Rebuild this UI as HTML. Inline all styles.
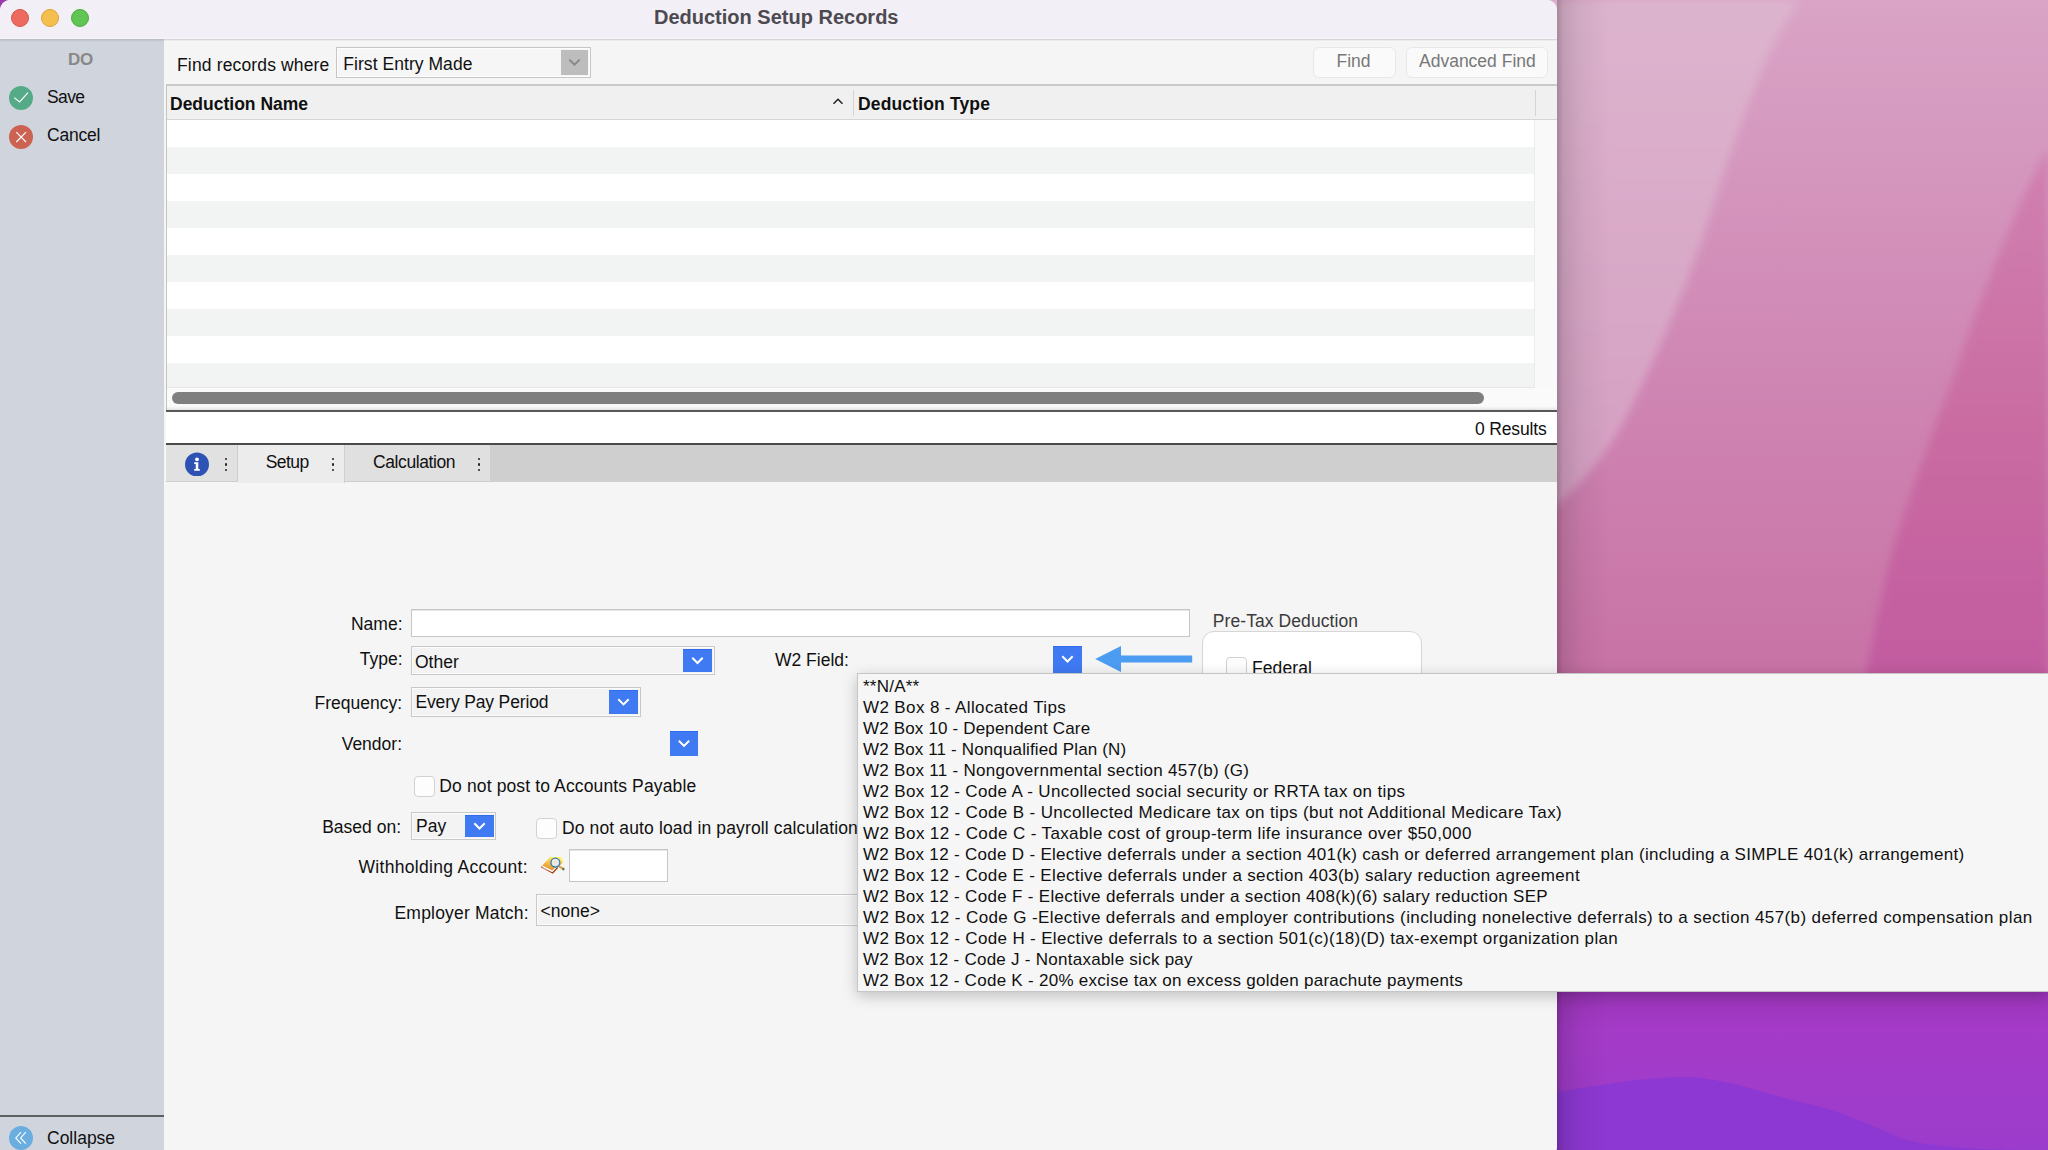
<!DOCTYPE html>
<html><head><meta charset="utf-8">
<style>
*{margin:0;padding:0;box-sizing:border-box}
html,body{width:2048px;height:1150px;overflow:hidden;background:#9a3aae}
body{position:relative;font-family:"Liberation Sans",sans-serif;color:#111}
.a{position:absolute}
.t{position:absolute;white-space:nowrap;line-height:20px;font-size:17.5px;color:#101010}
.b{font-weight:bold}
#wall{position:absolute;left:0;top:0;width:2048px;height:1150px}
.fld{position:absolute;background:#f3f3f3;border:1px solid #c8c8c8;box-shadow:inset 0 0 0 1px #fbfbfb}
.bb{position:absolute;background:#3f7af3;border-top:1px solid #2f6cf0}
.bb svg{position:absolute;left:0;top:-1px}
.cb{position:absolute;width:21px;height:21px;background:#fdfdfd;border:1px solid #d2d2d2;border-radius:4px}
#win{position:absolute;left:0;top:0;width:1557px;height:1157px;background:#f5f5f5;border-radius:10px;overflow:hidden}
</style></head><body>
<svg id="wall" width="2048" height="1150" viewBox="0 0 2048 1150">
<defs>
<linearGradient id="gM" x1="0" y1="0" x2="0" y2="680" gradientUnits="userSpaceOnUse">
<stop offset="0" stop-color="#d9a4c6"/><stop offset="0.55" stop-color="#cf86b3"/><stop offset="1" stop-color="#c872a6"/>
</linearGradient>
<linearGradient id="gL" x1="0" y1="0" x2="0" y2="560" gradientUnits="userSpaceOnUse">
<stop offset="0" stop-color="#ddb4ce"/><stop offset="1" stop-color="#d49cc1"/>
</linearGradient>
<linearGradient id="gR" x1="0" y1="170" x2="0" y2="680" gradientUnits="userSpaceOnUse">
<stop offset="0" stop-color="#d080b0"/><stop offset="0.5" stop-color="#ca6ca2"/><stop offset="1" stop-color="#c25ba0"/>
</linearGradient>
<linearGradient id="gP" x1="0" y1="990" x2="0" y2="1150" gradientUnits="userSpaceOnUse">
<stop offset="0" stop-color="#9a34b8"/><stop offset="0.25" stop-color="#a53bc8"/><stop offset="1" stop-color="#9c3ccc"/>
</linearGradient>
<linearGradient id="gSh" x1="1557" y1="0" x2="1610" y2="0" gradientUnits="userSpaceOnUse">
<stop offset="0" stop-color="#000" stop-opacity="0.24"/><stop offset="0.12" stop-color="#000" stop-opacity="0.12"/><stop offset="0.45" stop-color="#000" stop-opacity="0.05"/><stop offset="1" stop-color="#000" stop-opacity="0"/>
</linearGradient>
</defs>
<filter id="soft" x="-10%" y="-10%" width="120%" height="120%"><feGaussianBlur stdDeviation="4"/></filter>
<rect x="1500" y="0" width="548" height="700" fill="url(#gM)"/>
<path d="M1500 0 L1800 0 C1770 40 1745 110 1715 200 C1690 280 1660 350 1625 420 C1605 455 1585 480 1557 505 L1500 520 Z" fill="url(#gL)" filter="url(#soft)"/>
<path d="M2048 148 C2022 195 1997 255 1970 330 C1944 405 1915 475 1893 550 C1880 600 1870 650 1862 700 L2048 700 Z" fill="url(#gR)" filter="url(#soft)"/>
<rect x="1500" y="700" width="548" height="290" fill="#c468a6"/>
<rect x="1500" y="990" width="548" height="160" fill="url(#gP)"/>
<path d="M1557 1092 C1600 1085 1650 1076 1690 1077 C1730 1080 1760 1092 1800 1102 C1840 1110 1870 1125 1900 1138 C1940 1150 2000 1150 2048 1150 L1557 1150 Z" fill="#8d38d3"/>
<rect x="1557" y="0" width="60" height="1150" fill="url(#gSh)"/>
</svg>

<div id="win">
  <!-- title bar -->
  <div class="a" style="left:0;top:0;width:1557px;height:39px;background:#f3eff6"></div>
  <div class="a" style="left:0;top:38px;width:1557px;height:1px;background:#f8f5fa"></div>
  <div class="a" style="left:164px;top:39px;width:1393px;height:1px;background:#d6d6d6"></div>
  <div class="a" style="left:164px;top:40px;width:1393px;height:1px;background:#ebebeb"></div>
  <div class="a" style="left:11px;top:9px;width:18px;height:18px;border-radius:50%;background:#ed6a5e;border:0.5px solid #d8564a"></div>
  <div class="a" style="left:41px;top:9px;width:18px;height:18px;border-radius:50%;background:#f4bf4f;border:0.5px solid #dca33a"></div>
  <div class="a" style="left:71px;top:9px;width:18px;height:18px;border-radius:50%;background:#61c554;border:0.5px solid #4ea83f"></div>
  <div class="t b" style="left:654px;top:5px;font-size:20px;line-height:24px;color:#4c4a50">Deduction Setup Records</div>

  <!-- sidebar -->
  <div class="a" style="left:0;top:39px;width:164px;height:1111px;background:#d0d4dd"></div>
  <div class="a" style="left:0;top:39px;width:164px;height:3px;background:linear-gradient(#b5b9c5,#c3c7d0 50%,#d0d4dd)"></div>
  <div class="t b" style="left:68px;top:49.5px;color:#888;font-size:17px;letter-spacing:-0.3px">DO</div>
  <svg class="a" style="left:9px;top:86px" width="24" height="24" viewBox="0 0 24 24"><circle cx="12" cy="12" r="12" fill="#55ab88"/><path d="M5.2 11.6 L10.6 15.9 L19 6.7" fill="none" stroke="#fff" stroke-width="1.15"/></svg>
  <div class="t" style="left:47px;top:87px;letter-spacing:-0.6px">Save</div>
  <svg class="a" style="left:9px;top:125px" width="24" height="24" viewBox="0 0 24 24"><circle cx="12" cy="12" r="12" fill="#cc6251"/><path d="M7.3 7.2 L17 17 M17 7.2 L7.3 17" fill="none" stroke="#fff" stroke-width="1.15"/></svg>
  <div class="t" style="left:47px;top:125px;letter-spacing:-0.2px">Cancel</div>
  <div class="a" style="left:0;top:1115px;width:164px;height:2px;background:#5f6062"></div>
  <svg class="a" style="left:9px;top:1126px" width="24" height="24" viewBox="0 0 24 24"><circle cx="12" cy="12" r="12" fill="#6aaee0"/><path d="M12 6.2 L6.8 11.9 L12 17.7 M16.8 6.2 L11.6 11.9 L16.8 17.7" fill="none" stroke="#fff" stroke-width="1.1"/></svg>
  <div class="t" style="left:47px;top:1128px">Collapse</div>

  <!-- find bar -->
  <div class="t" style="left:177px;top:55px;letter-spacing:0.15px">Find records where</div>
  <div class="a" style="left:336px;top:47px;width:255px;height:31px;border:1px solid #c6c6c6;background:#f6f6f6"></div>
  <div class="a" style="left:337px;top:48px;width:253px;height:29px;border:1px solid #fdfdfd"></div>
  <div class="a" style="left:561px;top:50px;width:27px;height:25px;background:#bdbdbd"></div>
  <svg class="a" style="left:561px;top:50px" width="27" height="25" viewBox="0 0 27 25"><path d="M8.3 9.6 L13.5 14.6 L18.7 9.6" fill="none" stroke="#878787" stroke-width="2"/></svg>
  <div class="t" style="left:343.3px;top:54px;letter-spacing:0.05px">First Entry Made</div>

  <div class="a" style="left:1313px;top:47px;width:83px;height:31px;border-radius:6px;background:#fafafa;border:1px solid #e8e8e8"></div>
  <div class="t" style="left:1336.5px;top:51px;color:#777">Find</div>
  <div class="a" style="left:1406px;top:47px;width:142px;height:31px;border-radius:6px;background:#fafafa;border:1px solid #e8e8e8"></div>
  <div class="t" style="left:1419px;top:51px;color:#777">Advanced Find</div>

  <!-- table -->
  <div class="a" style="left:166px;top:84px;width:1391px;height:2px;background:#c9c9c9"></div>
  <div class="a" style="left:166px;top:86px;width:1px;height:324px;background:#c4c4c4"></div>
  <div class="a" style="left:167px;top:86px;width:1390px;height:33px;background:#f0f0f0"></div>
  <div class="a" style="left:167px;top:119px;width:1390px;height:1px;background:#d5d5d5"></div>
  <div class="t b" style="left:170px;top:94px">Deduction Name</div>
  <svg class="a" style="left:831px;top:96px" width="14" height="10" viewBox="0 0 14 10"><path d="M2.5 7.8 L7 3.2 L11.5 7.8" fill="none" stroke="#222" stroke-width="1.5"/></svg>
  <div class="a" style="left:853px;top:90px;width:1px;height:26px;background:#d4d4d4"></div>
  <div class="t b" style="left:858px;top:94px;letter-spacing:0.15px">Deduction Type</div>
  <div class="a" style="left:1535px;top:90px;width:1px;height:26px;background:#d4d4d4"></div>
  <div id="rows" class="a" style="left:167px;top:120px;width:1367px;height:267px;background:repeating-linear-gradient(#fff 0,#fff 27px,#f2f4f3 27px,#f2f4f3 54px)"></div>
  <div class="a" style="left:1534px;top:120px;width:23px;height:290px;background:#f9f9f9;border-left:1px solid #ebebeb"></div>
  <div class="a" style="left:1535px;top:388px;width:22px;height:20px;background:#f3f3f3"></div>
  <div class="a" style="left:167px;top:387px;width:1367px;height:1px;background:#e6e6e6"></div>
  <div class="a" style="left:167px;top:388px;width:1390px;height:21px;background:#fafafa"></div>
  <div class="a" style="left:172px;top:392px;width:1312px;height:12px;border-radius:6px;background:#7f7f7f"></div>
  <div class="a" style="left:166px;top:406px;width:1391px;height:4px;background:linear-gradient(rgba(0,0,0,0),rgba(0,0,0,0.08))"></div>
  <div class="a" style="left:166px;top:410px;width:1391px;height:2px;background:#575757"></div>
  <div class="a" style="left:166px;top:412px;width:1391px;height:32px;background:#fff"></div>
  <div class="t" style="left:1475px;top:419px;letter-spacing:-0.15px">0 Results</div>
  <div class="a" style="left:166px;top:443px;width:1391px;height:2px;background:#4a4a4a"></div>

  <!-- tabs -->
  <div class="a" style="left:166px;top:445px;width:1391px;height:37px;background:#cfcfcf"></div>
  <div class="a" style="left:166px;top:445px;width:72px;height:37px;background:#e1e1e1;border-right:1px solid #cdcdcd;border-bottom:1px solid #cdcdcd"></div>
  <svg class="a" style="left:185px;top:452px" width="24" height="24" viewBox="0 0 24 24"><circle cx="12" cy="12.5" r="12" fill="#2d52b3"/><circle cx="12" cy="7.3" r="1.9" fill="#fff"/><path d="M9.2 10.3 H13.3 V17 H14.8 V18.7 H9.2 V17 H10.7 V12 H9.2 Z" fill="#fff"/></svg>
  <div class="a" style="left:224.5px;top:457.5px;width:2.5px;height:2.5px;border-radius:50%;background:#222"></div>
  <div class="a" style="left:224.5px;top:463px;width:2.5px;height:2.5px;border-radius:50%;background:#222"></div>
  <div class="a" style="left:224.5px;top:468.5px;width:2.5px;height:2.5px;border-radius:50%;background:#222"></div>
  <div class="a" style="left:238px;top:445px;width:107px;height:38px;background:#ececec;border-right:1px solid #cfcfcf"></div>
  <div class="t" style="left:265.7px;top:452px;letter-spacing:-0.55px">Setup</div>
  <div class="a" style="left:331.5px;top:457.5px;width:2.5px;height:2.5px;border-radius:50%;background:#222"></div>
  <div class="a" style="left:331.5px;top:463px;width:2.5px;height:2.5px;border-radius:50%;background:#222"></div>
  <div class="a" style="left:331.5px;top:468.5px;width:2.5px;height:2.5px;border-radius:50%;background:#222"></div>
  <div class="a" style="left:345px;top:445px;width:145px;height:37px;background:#e0e0e0;border-bottom:1px solid #cdcdcd"></div>
  <div class="t" style="left:373px;top:452px;letter-spacing:-0.4px">Calculation</div>
  <div class="a" style="left:477.5px;top:457.5px;width:2.5px;height:2.5px;border-radius:50%;background:#222"></div>
  <div class="a" style="left:477.5px;top:463px;width:2.5px;height:2.5px;border-radius:50%;background:#222"></div>
  <div class="a" style="left:477.5px;top:468.5px;width:2.5px;height:2.5px;border-radius:50%;background:#222"></div>

  <!-- FORM -->
  
  <!-- Name -->
  <div class="t" style="right:1154.5px;top:614px">Name:</div>
  <div class="a" style="left:411px;top:609px;width:779px;height:28px;background:#fff;border:1px solid #c6c6c6;box-shadow:inset 0 1px 0 #e6e6e6"></div>
  <!-- Type -->
  <div class="t" style="right:1154.5px;top:649px">Type:</div>
  <div class="fld" style="left:411px;top:646px;width:304px;height:29px"></div>
  <div class="bb" style="left:683px;top:649px;width:29px;height:23px"><svg width="29" height="23" viewBox="0 0 29 23"><path d="M9.3 8.7 L14.5 14 L19.7 8.7" fill="none" stroke="#fff" stroke-width="2"/></svg></div>
  <div class="t" style="left:415px;top:652px">Other</div>
  <!-- W2 -->
  <div class="t" style="left:775px;top:650px">W2 Field:</div>
  <div class="bb" style="left:1053px;top:646px;width:29px;height:27px"><svg width="29" height="27" viewBox="0 0 29 27"><path d="M9.3 10.3 L14.5 15.5 L19.7 10.3" fill="none" stroke="#fff" stroke-width="2"/></svg></div>
  <svg class="a" style="left:1094px;top:645px" width="100" height="28" viewBox="0 0 100 28"><path d="M1.2 14 L27 1 L27 10.6 L98.2 10.6 L98.2 17.5 L27 17.5 L27 27 Z" fill="#4c9cf1"/></svg>
  <!-- Pre-tax -->
  <div class="t" style="left:1212.8px;top:611px;color:#3a3a3a;letter-spacing:0.08px">Pre-Tax Deduction</div>
  <div class="a" style="left:1202px;top:631px;width:220px;height:80px;background:#fff;border:1px solid #d6d6d6;border-radius:12px"></div>
  <div class="a" style="left:1226px;top:657px;width:21px;height:21px;background:#fdfdfd;border:1px solid #d0d0d0;border-radius:4px"></div>
  <div class="t" style="left:1252px;top:658px;letter-spacing:0.1px">Federal</div>
  <!-- Frequency -->
  <div class="t" style="right:1155px;top:693px">Frequency:</div>
  <div class="fld" style="left:411px;top:687px;width:230px;height:30px"></div>
  <div class="bb" style="left:609px;top:690px;width:29px;height:24px"><svg width="29" height="24" viewBox="0 0 29 24"><path d="M9.3 9.2 L14.5 14.4 L19.7 9.2" fill="none" stroke="#fff" stroke-width="2"/></svg></div>
  <div class="t" style="left:415.5px;top:692px;letter-spacing:-0.15px">Every Pay Period</div>
  <!-- Vendor -->
  <div class="t" style="right:1155px;top:734px">Vendor:</div>
  <div class="bb" style="left:670px;top:731px;width:28px;height:25px"><svg width="28" height="25" viewBox="0 0 28 25"><path d="M8.8 9.7 L14 14.9 L19.2 9.7" fill="none" stroke="#fff" stroke-width="2"/></svg></div>
  <!-- checkbox 1 -->
  <div class="cb" style="left:414px;top:776px"></div>
  <div class="t" style="left:439.3px;top:776px;letter-spacing:0.13px">Do not post to Accounts Payable</div>
  <!-- Based on -->
  <div class="t" style="right:1156px;top:817px">Based on:</div>
  <div class="fld" style="left:411px;top:812px;width:85px;height:28px"></div>
  <div class="bb" style="left:465px;top:815px;width:29px;height:22px"><svg width="29" height="22" viewBox="0 0 29 22"><path d="M9.3 8.3 L14.5 13.5 L19.7 8.3" fill="none" stroke="#fff" stroke-width="2"/></svg></div>
  <div class="t" style="left:416px;top:816px">Pay</div>
  <div class="cb" style="left:536px;top:818px"></div>
  <div class="t" style="left:562px;top:818px;letter-spacing:0.13px">Do not auto load in payroll calculation</div>
  <!-- Withholding -->
  <div class="t" style="left:358.5px;top:857px;letter-spacing:0.3px">Withholding Account:</div>
  <svg class="a" style="left:538px;top:852px" width="30" height="26" viewBox="0 0 30 26">
    <defs><linearGradient id="bk" x1="0.6" y1="0" x2="0.2" y2="1"><stop offset="0" stop-color="#fff36a"/><stop offset="0.5" stop-color="#f0b444"/><stop offset="1" stop-color="#d8801e"/></linearGradient>
    <radialGradient id="lens" cx="0.45" cy="0.45" r="0.6"><stop offset="0" stop-color="#f8dcc8"/><stop offset="0.6" stop-color="#e6eef2"/><stop offset="1" stop-color="#9fd0ec"/></radialGradient></defs>
    <path d="M3.4 14.6 L12 5 L23 5 L24.5 7.5 L25 11 L19.2 15.4 L14.7 20.4 Z" fill="url(#bk)"/>
    <path d="M3.4 14.6 L14.7 20.6 L19.4 15.2 L18.6 14.6 L14.3 18.6 L4.4 13.6 Z" fill="#fff"/>
    <path d="M3.2 14.8 L14.7 21 L19.6 15.5" fill="none" stroke="#a8380e" stroke-width="1.3"/>
    <path d="M4.6 15.4 L14.3 19.6 L18.8 15" fill="none" stroke="#e6ecf6" stroke-width="0.9"/>
    <path d="M21.5 14.6 L25.6 17.2" stroke="#e2a632" stroke-width="2.3" stroke-linecap="round"/>
    <path d="M24.6 16.6 L25.9 17.4" stroke="#3b6aa0" stroke-width="2.3"/>
    <circle cx="17.4" cy="10.6" r="4.5" fill="url(#lens)" stroke="#3a76a6" stroke-width="1.3"/>
  </svg>
  <div class="a" style="left:569px;top:849px;width:99px;height:33px;background:#fff;border:1px solid #c6c6c6;box-shadow:inset 0 1px 0 #e6e6e6"></div>
  <!-- Employer match -->
  <div class="t" style="left:394.5px;top:903px;letter-spacing:0.2px">Employer Match:</div>
  <div class="fld" style="left:536px;top:894px;width:340px;height:32px"></div>
  <div class="t" style="left:540.5px;top:901px">&lt;none&gt;</div>

</div>

<!-- DROPDOWN -->
<div id="dd">
<div class="a" style="left:857px;top:673px;width:1191px;height:319px;background:#f6f6f6;border:1px solid #c6c6c6;border-right:none;box-shadow:0 4px 14px rgba(0,0,0,0.22)"></div>
<div class="t" style="left:863px;top:676.8px;font-size:17px;letter-spacing:0.233px">**N/A**</div>
<div class="t" style="left:863px;top:697.8px;font-size:17px;letter-spacing:0.379px">W2 Box 8 - Allocated Tips</div>
<div class="t" style="left:863px;top:718.9px;font-size:17px;letter-spacing:0.164px">W2 Box 10 - Dependent Care</div>
<div class="t" style="left:863px;top:739.9px;font-size:17px;letter-spacing:0.144px">W2 Box 11 - Nonqualified Plan (N)</div>
<div class="t" style="left:863px;top:760.9px;font-size:17px;letter-spacing:0.291px">W2 Box 11 - Nongovernmental section 457(b) (G)</div>
<div class="t" style="left:863px;top:781.9px;font-size:17px;letter-spacing:0.342px">W2 Box 12 - Code A - Uncollected social security or RRTA tax on tips</div>
<div class="t" style="left:863px;top:803.0px;font-size:17px;letter-spacing:0.360px">W2 Box 12 - Code B - Uncollected Medicare tax on tips (but not Additional Medicare Tax)</div>
<div class="t" style="left:863px;top:824.0px;font-size:17px;letter-spacing:0.372px">W2 Box 12 - Code C - Taxable cost of group-term life insurance over $50,000</div>
<div class="t" style="left:863px;top:845.0px;font-size:17px;letter-spacing:0.304px">W2 Box 12 - Code D - Elective deferrals under a section 401(k) cash or deferred arrangement plan (including a SIMPLE 401(k) arrangement)</div>
<div class="t" style="left:863px;top:866.1px;font-size:17px;letter-spacing:0.348px">W2 Box 12 - Code E - Elective deferrals under a section 403(b) salary reduction agreement</div>
<div class="t" style="left:863px;top:887.1px;font-size:17px;letter-spacing:0.318px">W2 Box 12 - Code F - Elective deferrals under a section 408(k)(6) salary reduction SEP</div>
<div class="t" style="left:863px;top:908.1px;font-size:17px;letter-spacing:0.393px">W2 Box 12 - Code G -Elective deferrals and employer contributions (including nonelective deferrals) to a section 457(b) deferred compensation plan</div>
<div class="t" style="left:863px;top:929.2px;font-size:17px;letter-spacing:0.340px">W2 Box 12 - Code H - Elective deferrals to a section 501(c)(18)(D) tax-exempt organization plan</div>
<div class="t" style="left:863px;top:950.2px;font-size:17px;letter-spacing:0.262px">W2 Box 12 - Code J - Nontaxable sick pay</div>
<div class="t" style="left:863px;top:971.2px;font-size:17px;letter-spacing:0.279px">W2 Box 12 - Code K - 20% excise tax on excess golden parachute payments</div>

</div>
</body></html>
